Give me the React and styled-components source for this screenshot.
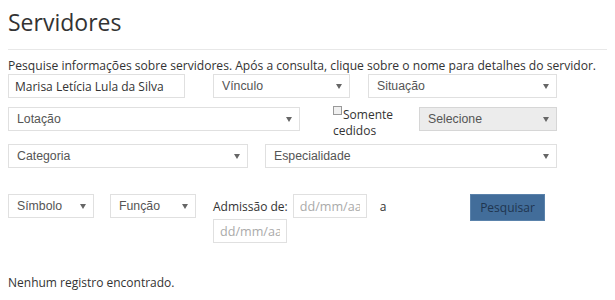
import React from "react";
import styled, { createGlobalStyle } from "styled-components";

const GlobalStyle = createGlobalStyle`
  body {
    margin: 0;
    background: #fff;
    font-family: "Open Sans", sans-serif;
    color: #333;
  }
`;

const Page = styled.div`
  padding: 0 8px;
  width: 599px;
`;

const Title = styled.h1`
  margin: 8px 0 0;
  font-size: 23px;
  font-weight: 400;
  line-height: 28px;
  color: #333;
`;

const Rule = styled.hr`
  margin: 13px 0 0;
  border: 0;
  border-top: 1px solid #e8e8e8;
`;

const Intro = styled.p`
  margin: 7px 0 0;
  font-size: 12.1px;
  line-height: 17px;
  white-space: nowrap;
`;

const Row = styled.div`
  display: flex;
  align-items: flex-start;
  margin-top: ${(p) => p.$top || 0}px;
`;

const TextInput = styled.input`
  box-sizing: border-box;
  width: ${(p) => p.$w}px;
  height: 24px;
  margin-left: ${(p) => p.$left || 0}px;
  padding: 0 6px;
  border: 1px solid #e0e0e0;
  font-family: "Open Sans", sans-serif;
  font-size: 12px;
  color: #333;
  outline: none;
  &::placeholder {
    color: #aaa;
    font-size: 12.6px;
  }
`;

const SelectBox = styled.div`
  box-sizing: border-box;
  display: flex;
  align-items: center;
  justify-content: space-between;
  width: ${(p) => p.$w}px;
  height: 24px;
  margin-left: ${(p) => p.$left || 0}px;
  padding: 0 7px 0 8px;
  border: 1px solid ${(p) => (p.$muted ? "#d6d6d6" : "#e0e0e0")};
  background: ${(p) => (p.$muted ? "#ececec" : "#fff")};
  font-family: "Liberation Sans", Arial, sans-serif;
  font-size: 12.3px;
  color: #555;
`;

const Arrow = styled.span`
  width: 0;
  height: 0;
  border-left: 3px solid transparent;
  border-right: 3px solid transparent;
  border-top: 5px solid #666;
`;

const CheckLabel = styled.label`
  width: 72px;
  height: 24px;
  margin: -1px 0 0 33px;
  font-size: 12px;
  line-height: 16px;
  color: #333;
`;

const Box = styled.span`
  display: inline-block;
  box-sizing: border-box;
  width: 9px;
  height: 9px;
  margin-right: 1px;
  border: 1px solid #999;
  background: #f0f0f0;
  vertical-align: 4px;
`;

const DateGroup = styled.div`
  display: flex;
  flex-wrap: wrap;
  align-items: center;
  row-gap: 1px;
  width: 245px;
  margin-left: 17px;
`;

const Label = styled.span`
  font-size: 12px;
  color: #333;
  margin: 0 ${(p) => p.$right || 0}px 0 ${(p) => p.$left || 0}px;
`;

const Button = styled.button`
  box-sizing: border-box;
  width: 75px;
  height: 27px;
  margin-left: 12px;
  border: 1px solid #5a82ab;
  background: #426d9a;
  font-family: "Open Sans", sans-serif;
  font-size: 12px;
  color: #1f3550;
`;

const Empty = styled.p`
  margin: 31px 0 0;
  font-size: 12px;
  line-height: 17px;
`;

function Select({ label, w, left, muted }) {
  return (
    <SelectBox $w={w} $left={left} $muted={muted}>
      {label}
      <Arrow />
    </SelectBox>
  );
}

export default function App() {
  return (
    <Page>
      <GlobalStyle />
      <Title>Servidores</Title>
      <Rule />
      <Intro>
        Pesquise informações sobre servidores. Após a consulta, clique sobre o
        nome para detalhes do servidor.
      </Intro>
      <Row>
        <TextInput $w={177} defaultValue="Marisa Letícia Lula da Silva" />
        <Select label="Vínculo" w={137} left={28} />
        <Select label="Situação" w={189} left={18} />
      </Row>
      <Row $top={9}>
        <Select label="Lotação" w={292} />
        <CheckLabel>
          <Box />
          Somente cedidos
        </CheckLabel>
        <Select label="Selecione" w={138} left={14} muted />
      </Row>
      <Row $top={13}>
        <Select label="Categoria" w={240} />
        <Select label="Especialidade" w={292} left={17} />
      </Row>
      <Row $top={26}>
        <Select label="Símbolo" w={86} />
        <Select label="Função" w={86} left={16} />
        <DateGroup>
          <Label $right={5}>Admissão de:</Label>
          <TextInput $w={74} placeholder="dd/mm/aaaa" />
          <Label $left={13} $right={60}>
            a
          </Label>
          <TextInput $w={74} placeholder="dd/mm/aaaa" />
        </DateGroup>
        <Button>Pesquisar</Button>
      </Row>
      <Empty>Nenhum registro encontrado.</Empty>
    </Page>
  );
}
